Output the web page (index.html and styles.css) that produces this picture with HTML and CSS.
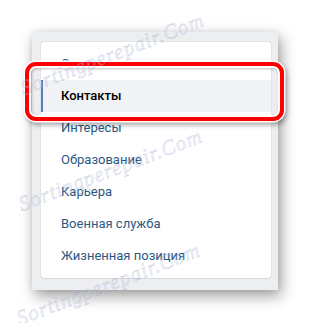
FILE: index.html
```html
<!DOCTYPE html>
<html lang="ru">
<head>
<meta charset="utf-8">
<link rel="stylesheet" href="styles.css">
</head>
<body>
<div class="stage">
  <div class="panel">
    <nav class="card">
      <div class="item">Основное</div>
      <div class="item item-selected">Контакты</div>
      <div class="item">Интересы</div>
      <div class="item">Образование</div>
      <div class="item">Карьера</div>
      <div class="item">Военная служба</div>
      <div class="item">Жизненная позиция</div>
    </nav>
  </div>
  <div class="highlight"></div>
  <div class="wm wm1">Sortingperepair.Com</div>
  <div class="wm wm2">Sortingperepair.Com</div>
  <div class="wm wm3">Sortingperepair.Com</div>
</div>
</body>
</html>
```
FILE: styles.css
```css
html, body {
  margin: 0;
  padding: 0;
  background: #fff;
}
.stage {
  position: relative;
  width: 310px;
  height: 323px;
  overflow: hidden;
  padding: 32px 0 0 32px;
  box-sizing: border-box;
}
.panel {
  width: 246px;
  height: 258px;
  box-sizing: border-box;
  background: #edeef0;
  padding: 10px 7px 12px 9px;
  box-shadow: 3px 6px 14px rgba(0, 0, 0, 0.38), 0 0 6px rgba(0, 0, 0, 0.08);
}
.card {
  background: #fff;
  border-radius: 4px;
  box-shadow: 0 1px 0 0 #d7d8db, 0 0 0 1px #e3e4e8;
  padding: 6px 0;
  display: flex;
  flex-direction: column;
}
.item {
  height: 32px;
  line-height: 32px;
  padding-left: 20px;
  font-family: Roboto, "Open Sans", sans-serif;
  font-size: 13px;
  color: #2a5885;
}
.item-selected {
  background: #f0f2f5;
  border-left: 2px solid #5181b8;
  padding-left: 18px;
  color: #000;
  font-weight: 500;
}
.highlight {
  position: absolute;
  left: 25px;
  top: 62px;
  width: 259px;
  height: 59px;
  box-sizing: border-box;
  border: 4px solid #f00;
  border-radius: 11px;
  box-shadow: 0 0 0 1.5px #fff, 2px 3px 5px 1px rgba(0, 0, 0, 0.35),
    inset 0 0 0 2px #fff, inset 1px 1px 3px 2px rgba(0, 0, 0, 0.25);
}
.wm {
  position: absolute;
  font-family: "Liberation Serif", serif;
  font-style: italic;
  font-size: 21px;
  color: rgba(215, 222, 240, 0.3);
  -webkit-text-stroke: 0.5px rgba(120, 135, 185, 0.35);
  transform: rotate(-21deg);
  transform-origin: left bottom;
  white-space: nowrap;
  letter-spacing: 1px;
}
.wm1 { left: 26px; top: 76px; }
.wm2 { left: 24px; top: 192px; }
.wm3 { left: 22px; top: 306px; }
```
